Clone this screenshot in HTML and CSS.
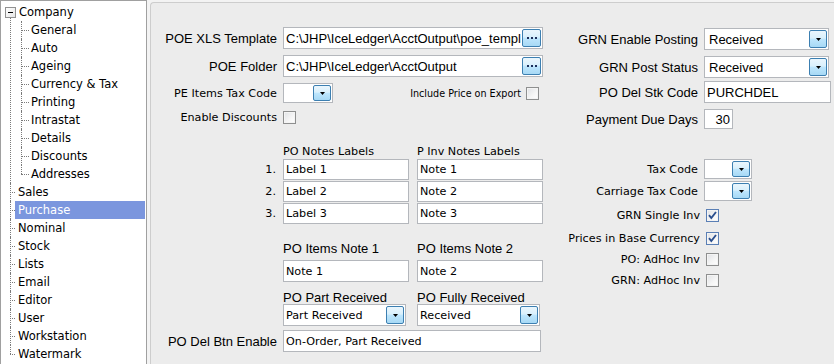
FILE: index.html
```html
<!DOCTYPE html>
<html>
<head>
<meta charset="utf-8">
<link rel="stylesheet" href="styles.css">
</head>
<body>
<div class="app">
  <ul class="tree top">
    <li class="open">
      <span class="toggle"></span><span class="lab lab-root">Company</span>
      <ul class="sub">
        <li><span class="lab">General</span></li>
        <li><span class="lab">Auto</span></li>
        <li><span class="lab">Ageing</span></li>
        <li><span class="lab">Currency &amp; Tax</span></li>
        <li><span class="lab">Printing</span></li>
        <li><span class="lab">Intrastat</span></li>
        <li><span class="lab">Details</span></li>
        <li><span class="lab">Discounts</span></li>
        <li><span class="lab">Addresses</span></li>
      </ul>
    </li>
    <li><span class="lab">Sales</span></li>
    <li class="sel"><span class="lab">Purchase</span></li>
    <li><span class="lab">Nominal</span></li>
    <li><span class="lab">Stock</span></li>
    <li><span class="lab">Lists</span></li>
    <li><span class="lab">Email</span></li>
    <li><span class="lab">Editor</span></li>
    <li><span class="lab">User</span></li>
    <li><span class="lab">Workstation</span></li>
    <li><span class="lab">Watermark</span></li>
  </ul>

  <main class="panel">
    <section class="colL">
      <div class="row h22 mt24">
        <span class="lbl ar">POE XLS Template</span>
        <div class="combo w260"><span class="val ar">C:\JHP\IceLedger\AcctOutput\poe_template.xls</span><span class="btn dots-btn"><svg width="10" height="2" viewBox="0 0 10 2"><rect x="0" y="0" width="2" height="2" fill="#1d2f5a"/><rect x="4" y="0" width="2" height="2" fill="#1d2f5a"/><rect x="8" y="0" width="2" height="2" fill="#1d2f5a"/></svg></span></div>
      </div>
      <div class="row h22 mt6">
        <span class="lbl ar">POE Folder</span>
        <div class="combo w260"><span class="val ar">C:\JHP\IceLedger\AcctOutput</span><span class="btn dots-btn"><svg width="10" height="2" viewBox="0 0 10 2"><rect x="0" y="0" width="2" height="2" fill="#1d2f5a"/><rect x="4" y="0" width="2" height="2" fill="#1d2f5a"/><rect x="8" y="0" width="2" height="2" fill="#1d2f5a"/></svg></span></div>
      </div>
      <div class="row h20 mt6">
        <span class="lbl">PE Items Tax Code</span>
        <div class="combo w50"><span class="val"></span><span class="btn arrow"><svg width="5" height="3" viewBox="0 0 5 3"><polygon points="0,0 5,0 2.5,3" fill="#000"/></svg></span></div>
        <span class="spacer"></span>
        <span class="small">Include Price on Export</span>
        <span class="cb mr4"></span>
      </div>
      <div class="row h14 mt7">
        <span class="lbl">Enable Discounts</span>
        <span class="cb"></span>
      </div>

      <div class="heads h13 mt21">
        <span class="col">PO Notes Labels</span>
        <span class="col colB">P Inv Notes Labels</span>
      </div>
      <div class="row h21 mt1">
        <span class="lbl num">1.</span>
        <div class="field w126">Label 1</div>
        <div class="field w126 colB">Note 1</div>
      </div>
      <div class="row h21 mt1">
        <span class="lbl num">2.</span>
        <div class="field w126">Label 2</div>
        <div class="field w126 colB">Note 2</div>
      </div>
      <div class="row h21 mt1">
        <span class="lbl num">3.</span>
        <div class="field w126">Label 3</div>
        <div class="field w126 colB">Note 3</div>
      </div>

      <div class="heads h14 mt17">
        <span class="col ar">PO Items Note 1</span>
        <span class="col colB ar">PO Items Note 2</span>
      </div>
      <div class="row h22 mt5">
        <span class="lbl"></span>
        <div class="field w126">Note 1</div>
        <div class="field w126 colB">Note 2</div>
      </div>

      <div class="heads h14 mt8">
        <span class="col ar">PO Part Received</span>
        <span class="col colB ar">PO Fully Received</span>
      </div>
      <div class="row h22 mt0">
        <span class="lbl"></span>
        <div class="combo w123"><span class="val">Part Received</span><span class="btn arrow"><svg width="5" height="3" viewBox="0 0 5 3"><polygon points="0,0 5,0 2.5,3" fill="#000"/></svg></span></div>
        <div class="combo w123 colB2"><span class="val">Received</span><span class="btn arrow"><svg width="5" height="3" viewBox="0 0 5 3"><polygon points="0,0 5,0 2.5,3" fill="#000"/></svg></span></div>
      </div>
      <div class="row h22 mt4">
        <span class="lbl ar">PO Del Btn Enable</span>
        <div class="field w258">On-Order, Part Received</div>
      </div>
    </section>

    <section class="colR">
      <div class="row h22 mt25">
        <span class="lbl lblR ar">GRN Enable Posting</span>
        <div class="combo w125"><span class="val ar pl4">Received</span><span class="btn arrow"><svg width="5" height="3" viewBox="0 0 5 3"><polygon points="0,0 5,0 2.5,3" fill="#000"/></svg></span></div>
      </div>
      <div class="row h22 mt6">
        <span class="lbl lblR ar">GRN Post Status</span>
        <div class="combo w125"><span class="val ar pl4">Received</span><span class="btn arrow"><svg width="5" height="3" viewBox="0 0 5 3"><polygon points="0,0 5,0 2.5,3" fill="#000"/></svg></span></div>
      </div>
      <div class="row h22 mt3">
        <span class="lbl lblR ar">PO Del Stk Code</span>
        <div class="field w127 ar">PURCHDEL</div>
      </div>
      <div class="row h20 mt6">
        <span class="lbl lblR ar">Payment Due Days</span>
        <div class="field w29 ar right">30</div>
      </div>

      <div class="row h20 mt30">
        <span class="lbl lblR">Tax Code</span>
        <div class="combo w48"><span class="val"></span><span class="btn arrow"><svg width="5" height="3" viewBox="0 0 5 3"><polygon points="0,0 5,0 2.5,3" fill="#000"/></svg></span></div>
      </div>
      <div class="row h20 mt2">
        <span class="lbl lblR">Carriage Tax Code</span>
        <div class="combo w48"><span class="val"></span><span class="btn arrow"><svg width="5" height="3" viewBox="0 0 5 3"><polygon points="0,0 5,0 2.5,3" fill="#000"/></svg></span></div>
      </div>
      <div class="row h14 mt7">
        <span class="lbl lblC">GRN Single Inv</span>
        <span class="cb on"><svg width="11" height="11" viewBox="0 0 11 11"><path d="M2 5.2 L4.3 8 L9 2" stroke="#2b4f8e" stroke-width="1.9" fill="none"/></svg></span>
      </div>
      <div class="row h14 mt9">
        <span class="lbl lblC">Prices in Base Currency</span>
        <span class="cb on"><svg width="11" height="11" viewBox="0 0 11 11"><path d="M2 5.2 L4.3 8 L9 2" stroke="#2b4f8e" stroke-width="1.9" fill="none"/></svg></span>
      </div>
      <div class="row h14 mt7">
        <span class="lbl lblC">PO: AdHoc Inv</span>
        <span class="cb"></span>
      </div>
      <div class="row h14 mt7">
        <span class="lbl lblC">GRN: AdHoc Inv</span>
        <span class="cb"></span>
      </div>
    </section>
  </main>
</div>
</body>
</html>
```

FILE: styles.css
```css
html, body {
  margin: 0;
  padding: 0;
}
body {
  width: 834px;
  height: 364px;
  overflow: hidden;
  background: #f3f3f3;
  font-family: "DejaVu Sans", sans-serif;
  font-size: 11.2px;
  color: #000;
}
.app {
  display: flex;
  align-items: flex-start;
}

/* ---------- tree ---------- */
.tree {
  width: 147px;
  height: 370px;
  box-sizing: border-box;
  border: 1px solid #a0a0a0;
  background: #fff;
  margin: 0;
  padding: 2px 0 0 0;
  list-style: none;
  flex: none;
  font-size: 11.5px;
}
.tree ul {
  list-style: none;
  margin: 0;
  padding: 0;
}
.tree li {
  position: relative;
}
.lab {
  display: block;
  height: 18px;
  line-height: 18px;
  white-space: nowrap;
}
.top > li > .lab {
  margin-left: 14px;
  margin-right: 1px;
  padding-left: 3px;
}
.top > li > .lab-root {
  padding-left: 4px;
}
.sub .lab {
  padding-left: 30px;
}
.top > li::before {
  content: "";
  position: absolute;
  left: 9px;
  top: 0;
  height: 100%;
  border-left: 1px dotted #7a7a7a;
}
.top > li:first-child::before {
  top: 15px;
  height: calc(100% - 15px);
}
.top > li:last-child::before {
  height: 9px;
}
.top > li::after {
  content: "";
  position: absolute;
  left: 9px;
  top: 9px;
  width: 5px;
  border-top: 1px dotted #7a7a7a;
}
.top > li:first-child::after {
  display: none;
}
.sub > li::before {
  content: "";
  position: absolute;
  left: 20px;
  top: 0;
  height: 100%;
  border-left: 1px dotted #7a7a7a;
}
.sub > li:last-child::before {
  height: 9px;
}
.sub > li::after {
  content: "";
  position: absolute;
  left: 20px;
  top: 9px;
  width: 8px;
  border-top: 1px dotted #7a7a7a;
}
.toggle {
  position: absolute;
  left: 4px;
  top: 4px;
  width: 11px;
  height: 11px;
  box-sizing: border-box;
  border: 1px solid #919191;
  background: linear-gradient(135deg, #ffffff, #e6e6e6);
}
.toggle::after {
  content: "";
  position: absolute;
  left: 2px;
  top: 4px;
  width: 5px;
  height: 1px;
  background: #000;
}
.sel > .lab {
  background: #7b96de;
  color: #fff;
}

/* ---------- panel ---------- */
.panel {
  margin-left: 3px;
  margin-top: 2px;
  flex: 1;
  height: 370px;
  box-sizing: border-box;
  border: 1px solid #cdcdcd;
  border-right: none;
  border-radius: 4px 0 0 0;
  background: #ececec;
  display: flex;
  align-items: flex-start;
}
.colL {
  width: 392px;
  flex: none;
}
.colR {
  width: 272px;
  margin-left: 17px;
  flex: none;
}
.row {
  display: flex;
  align-items: center;
  gap: 6px;
}
.heads {
  display: flex;
  align-items: center;
  padding-left: 132px;
  white-space: nowrap;
}
.heads .col {
  width: 126px;
}
.heads .colB {
  margin-left: 8px;
}
.lbl {
  width: 126px;
  flex: none;
  text-align: right;
  white-space: nowrap;
}
.lblR {
  width: 138px;
}
.lblC {
  width: 140px;
}
.num {
  padding-right: 1px;
  box-sizing: border-box;
}
.ar {
  font-family: "Liberation Sans", Arial, sans-serif;
  font-size: 13px;
}
.small {
  font-size: 9.6px;
  white-space: nowrap;
  margin-right: -1px;
}
.spacer {
  flex: 1;
}

.h13 { height: 13px; }
.h14 { height: 14px; }
.h20 { height: 20px; }
.h21 { height: 21px; }
.h22 { height: 22px; }
.mt0 { margin-top: 0; }
.mt1 { margin-top: 1px; }
.mt2 { margin-top: 2px; }
.mt3 { margin-top: 3px; }
.mt4 { margin-top: 4px; }
.mt5 { margin-top: 5px; }
.mt6 { margin-top: 6px; }
.mt7 { margin-top: 7px; }
.mt8 { margin-top: 8px; }
.mt9 { margin-top: 9px; }
.mt17 { margin-top: 17px; }
.mt21 { margin-top: 21px; }
.mt24 { margin-top: 24px; }
.mt25 { margin-top: 25px; }
.mt30 { margin-top: 30px; }
.mr4 { margin-right: 4px; }

.w29 { width: 29px; }
.w48 { width: 48px; }
.w50 { width: 50px; }
.w123 { width: 123px; }
.w125 { width: 125px; }
.w126 { width: 126px; }
.w127 { width: 127px; }
.w258 { width: 258px; }
.w260 { width: 260px; }

.field {
  height: 100%;
  box-sizing: border-box;
  background: #fff;
  border: 1px solid #b4b7bc;
  padding: 0 2px;
  display: flex;
  align-items: center;
  white-space: nowrap;
  overflow: hidden;
  flex: none;
}
.field.right {
  justify-content: flex-end;
}
.row .colB {
  margin-left: 2px;
}
.colB2 {
  margin-left: 5px;
}
.combo {
  height: 100%;
  box-sizing: border-box;
  background: #fff;
  border: 1px solid #b4b7bc;
  display: flex;
  align-items: stretch;
  flex: none;
  overflow: hidden;
}
.combo .val {
  flex: 1;
  min-width: 0;
  padding-left: 2px;
  display: flex;
  align-items: center;
  white-space: nowrap;
  overflow: hidden;
}
.combo .val.pl4 {
  padding-left: 4px;
}
.btn {
  width: 18px;
  flex: none;
  margin: 1px;
  box-sizing: border-box;
  border: 1px solid #3c7fb1;
  border-radius: 2px;
  background: linear-gradient(#eaf6fd 0%, #d9f0fc 45%, #bee6fd 50%, #a7d9f5 100%);
  display: flex;
  align-items: center;
  justify-content: center;
}
.btn svg {
  display: block;
}
.dots-btn {
  width: 19px;
}
.cb {
  width: 13px;
  height: 13px;
  box-sizing: border-box;
  border: 1px solid #8e8f8f;
  background: linear-gradient(135deg, #dfe1e4 0%, #f6f6f6 60%, #ffffff 100%);
  box-shadow: inset 0 0 0 1px #f4f4f4;
  flex: none;
  display: flex;
  align-items: center;
  justify-content: center;
}
.cb.on {
  border-color: #5a7fb5;
}
.cb svg {
  display: block;
}
```
